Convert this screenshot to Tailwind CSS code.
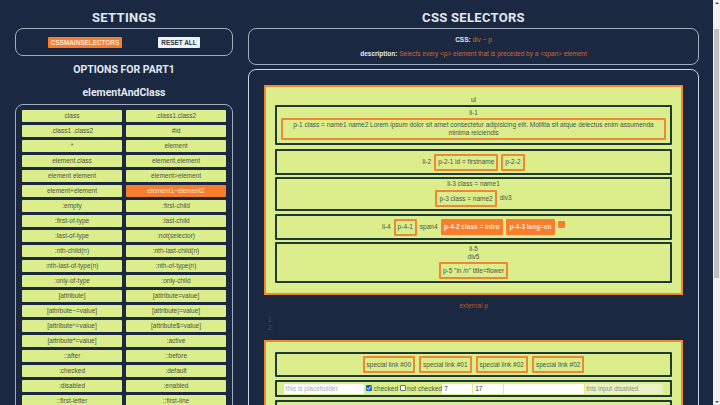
<!DOCTYPE html>
<html lang="en">
<head>
  <meta charset="UTF-8" />
  <title>CSS Selectors</title>
  <script src="https://cdn.jsdelivr.net/npm/@tailwindcss/browser@4"></script>
</head>
<body class="h-[405px] overflow-hidden bg-[#1a2842] font-['Roboto',sans-serif]">
  <div class="flex h-[405px]">
    <div class="flex h-[405px] w-[713px] gap-[15px] overflow-hidden pl-[15px]">
      <!-- Settings column -->
      <div class="w-[218px] shrink-0">
        <h2 class="pt-[10px] text-center text-[13px] leading-[16px] font-bold tracking-[0.3px] text-[#e2e8f0]">SETTINGS</h2>
        <div class="mt-[2px] flex h-[28px] items-center justify-center gap-[36px] rounded-[8px] border border-[#a0aec0]">
          <button class="h-[11px] w-[74px] rounded-[1px] bg-[#f97d2c] font-['Liberation_Sans',sans-serif] text-[6.4px] leading-[11px] font-bold text-[#fde8d8]">CSSMAINSELECTORS</button>
          <button class="h-[11px] w-[42px] rounded-[1px] bg-[#edf2f7] font-['Liberation_Sans',sans-serif] text-[6.4px] leading-[11px] font-bold text-[#2d3748]">RESET ALL</button>
        </div>
        <h3 class="mt-[7px] text-center text-[10.5px] leading-[14px] font-bold text-[#e2e8f0]">OPTIONS FOR PART1</h3>
        <h3 class="mt-[9px] text-center text-[10.5px] leading-[14px] font-bold text-[#e2e8f0]">elementAndClass</h3>
        <div class="mt-[4px] grid grid-cols-2 gap-x-[4px] gap-y-[3.5px] rounded-t-[8px] border border-[#a0aec0] px-[6px] pt-[5px] pb-[10px] font-['Liberation_Sans',sans-serif] text-[6.5px] leading-[11.5px] text-[#4a5548]">
          <div class="h-[11.5px] rounded-[1px] bg-[#dcee8c] text-center">class</div>
          <div class="h-[11.5px] rounded-[1px] bg-[#dcee8c] text-center">.class1.class2</div>
          <div class="h-[11.5px] rounded-[1px] bg-[#dcee8c] text-center">.class1 .class2</div>
          <div class="h-[11.5px] rounded-[1px] bg-[#dcee8c] text-center">#id</div>
          <div class="h-[11.5px] rounded-[1px] bg-[#dcee8c] text-center">*</div>
          <div class="h-[11.5px] rounded-[1px] bg-[#dcee8c] text-center">element</div>
          <div class="h-[11.5px] rounded-[1px] bg-[#dcee8c] text-center">element.class</div>
          <div class="h-[11.5px] rounded-[1px] bg-[#dcee8c] text-center">element,element</div>
          <div class="h-[11.5px] rounded-[1px] bg-[#dcee8c] text-center">element element</div>
          <div class="h-[11.5px] rounded-[1px] bg-[#dcee8c] text-center">element&gt;element</div>
          <div class="h-[11.5px] rounded-[1px] bg-[#dcee8c] text-center">element+element</div>
          <div class="h-[11.5px] rounded-[1px] bg-[#f97d2c] text-center text-[#fde8d8]">element1~element2</div>
          <div class="h-[11.5px] rounded-[1px] bg-[#dcee8c] text-center">:empty</div>
          <div class="h-[11.5px] rounded-[1px] bg-[#dcee8c] text-center">:first-child</div>
          <div class="h-[11.5px] rounded-[1px] bg-[#dcee8c] text-center">:first-of-type</div>
          <div class="h-[11.5px] rounded-[1px] bg-[#dcee8c] text-center">:last-child</div>
          <div class="h-[11.5px] rounded-[1px] bg-[#dcee8c] text-center">:last-of-type</div>
          <div class="h-[11.5px] rounded-[1px] bg-[#dcee8c] text-center">:not(selector)</div>
          <div class="h-[11.5px] rounded-[1px] bg-[#dcee8c] text-center">:nth-child(n)</div>
          <div class="h-[11.5px] rounded-[1px] bg-[#dcee8c] text-center">:nth-last-child(n)</div>
          <div class="h-[11.5px] rounded-[1px] bg-[#dcee8c] text-center">:nth-last-of-type(n)</div>
          <div class="h-[11.5px] rounded-[1px] bg-[#dcee8c] text-center">:nth-of-type(n)</div>
          <div class="h-[11.5px] rounded-[1px] bg-[#dcee8c] text-center">:only-of-type</div>
          <div class="h-[11.5px] rounded-[1px] bg-[#dcee8c] text-center">:only-child</div>
          <div class="h-[11.5px] rounded-[1px] bg-[#dcee8c] text-center">[attribute]</div>
          <div class="h-[11.5px] rounded-[1px] bg-[#dcee8c] text-center">[attribute=value]</div>
          <div class="h-[11.5px] rounded-[1px] bg-[#dcee8c] text-center">[attribute~=value]</div>
          <div class="h-[11.5px] rounded-[1px] bg-[#dcee8c] text-center">[attribute|=value]</div>
          <div class="h-[11.5px] rounded-[1px] bg-[#dcee8c] text-center">[attribute^=value]</div>
          <div class="h-[11.5px] rounded-[1px] bg-[#dcee8c] text-center">[attribute$=value]</div>
          <div class="h-[11.5px] rounded-[1px] bg-[#dcee8c] text-center">[attribute*=value]</div>
          <div class="h-[11.5px] rounded-[1px] bg-[#dcee8c] text-center">:active</div>
          <div class="h-[11.5px] rounded-[1px] bg-[#dcee8c] text-center">::after</div>
          <div class="h-[11.5px] rounded-[1px] bg-[#dcee8c] text-center">::before</div>
          <div class="h-[11.5px] rounded-[1px] bg-[#dcee8c] text-center">:checked</div>
          <div class="h-[11.5px] rounded-[1px] bg-[#dcee8c] text-center">:default</div>
          <div class="h-[11.5px] rounded-[1px] bg-[#dcee8c] text-center">:disabled</div>
          <div class="h-[11.5px] rounded-[1px] bg-[#dcee8c] text-center">:enabled</div>
          <div class="h-[11.5px] rounded-[1px] bg-[#dcee8c] text-center">::first-letter</div>
          <div class="h-[11.5px] rounded-[1px] bg-[#dcee8c] text-center">::first-line</div>
        </div>
      </div>

      <!-- Selectors column -->
      <div class="w-[451px] shrink-0">
        <h2 class="pt-[10px] text-center text-[13px] leading-[16px] font-bold tracking-[0.3px] text-[#e2e8f0]">CSS SELECTORS</h2>
        <div class="mt-[2px] h-[37px] rounded-[8px] border border-[#a0aec0] pt-[5px] text-center font-['Liberation_Sans',sans-serif] text-[6.5px] leading-[11px]">
          <p class="font-bold text-[#e2e8f0]">CSS: <span class="font-normal text-[#d8662a]">div ~ p</span></p>
          <p class="mt-[3px] font-bold text-[#e2e8f0]">description: <span class="font-normal text-[#d8662a]">Selects every &lt;p&gt; element that is preceded by a &lt;span&gt; element</span></p>
        </div>
        <div class="mt-[4px] rounded-t-[8px] border border-[#cbd5e0] px-[15px] pt-[15px] font-['Liberation_Sans',sans-serif] text-[6.5px] leading-[8px] text-[#4a5548]">
          <!-- first ul -->
          <div class="h-[210px] border-2 border-[#ed8936] bg-[#dcee8c] px-[9px] pt-[8px] text-center">
            <div class="leading-[9px]">ul</div>
            <div class="mt-[1px] h-[40px] rounded-[1px] border-2 border-[#1f3a36] pt-[2px]">
              li-1
              <div class="mx-[4px] mt-[1px] rounded-[1px] border-2 border-[#ed8936] py-[1px] leading-[8px]">p-1 class = name1 name2 Lorem ipsum dolor sit amet consectetur adipisicing elit. Mollitia sit atque delectus enim assumenda minima reiciendis</div>
            </div>
            <div class="mt-[4px] flex h-[26px] items-center justify-center gap-[3px] rounded-[1px] border-2 border-[#1f3a36]">
              <span>li-2</span>
              <span class="rounded-[1px] border-2 border-[#ed8936] px-[2px] py-[2.5px]">p-2-1 id = firstname</span>
              <span class="rounded-[1px] border-2 border-[#ed8936] px-[2px] py-[2.5px]">p-2-2</span>
            </div>
            <div class="mt-[2px] h-[34px] rounded-[1px] border-2 border-[#1f3a36] pt-[1px]">
              li-3 class = name1
              <div class="mt-[2px] flex justify-center gap-[3px]">
                <span class="rounded-[1px] border-2 border-[#ed8936] px-[2px] py-[2.5px]">p-3 class = name2</span>
                <span class="py-[4px]">div3</span>
              </div>
            </div>
            <div class="mt-[3px] flex h-[26px] items-center justify-center gap-[3px] rounded-[1px] border-2 border-[#1f3a36]">
              <span>li-4</span>
              <span class="rounded-[1px] border-2 border-[#ed8936] px-[2px] py-[2.5px]">p-4-1</span>
              <span>span4</span>
              <span class="rounded-[1px] bg-[#f97d2c] px-[3.5px] py-[4px] font-bold text-[#fde8d8]">p-4-2 class = intro</span>
              <span class="rounded-[1px] bg-[#f97d2c] px-[3.5px] py-[4px] font-bold text-[#fde8d8]">p-4-3 lang=en</span>
              <span class="mb-[6px] h-[7px] w-[7px] rounded-[1px] bg-[#f97d2c]"></span>
            </div>
            <div class="mt-[2px] h-[41px] rounded-[1px] border-2 border-[#1f3a36] pt-[1px]">
              li-5
              <div>div5</div>
              <div class="mt-[1px] flex justify-center">
                <span class="rounded-[1px] border-2 border-[#ed8936] px-[2px] py-[2.5px]">p-5 "in /n" title=flower</span>
              </div>
            </div>
          </div>
          <div class="mt-[7px] text-center text-[#c05621]">external p</div>
          <ol class="mt-[6px] pl-[4px] text-[#4a5568]">
            <li>1.</li>
            <li>2.</li>
          </ol>
          <!-- second ul -->
          <div class="mt-[8px] border-2 border-[#ed8936] bg-[#dcee8c] px-[9px] pt-[10px] pb-[10px]">
            <div class="flex h-[25px] items-center justify-center gap-[4px] rounded-[1px] border-2 border-[#1f3a36]">
              <span class="rounded-[1px] border-2 border-[#ed8936] px-[2px] py-[2.5px]">special link #00</span>
              <span class="rounded-[1px] border-2 border-[#ed8936] px-[2px] py-[2.5px]">special link #01</span>
              <span class="rounded-[1px] border-2 border-[#ed8936] px-[2px] py-[2.5px]">special link #02</span>
              <span class="rounded-[1px] border-2 border-[#ed8936] px-[2px] py-[2.5px]">special link #02</span>
            </div>
            <div class="mt-[3px] flex h-[17px] items-center justify-center rounded-[1px] border-2 border-[#1f3a36]">
              <span class="flex h-[10px] w-[80px] items-center bg-white px-[2px] text-[#a0aec0]">this is placeholder</span>
              <svg class="ml-[2px] mb-[1px] rounded-[1px] bg-[#1a66c9]" width="6" height="6" viewBox="0 0 6 6"><path d="M1 3 L2.5 4.5 L5 1.5" fill="none" stroke="#fff" stroke-width="1"/></svg>
              <span class="ml-[2px]">checked</span>
              <span class="ml-[2px] mb-[1px] h-[6px] w-[6px] rounded-[1px] border border-[#6b7280] bg-white"></span>
              <span class="ml-[1px]">not checked</span>
              <span class="flex h-[10px] w-[30px] items-center bg-white px-[2px] text-[#2d3748]">7</span>
              <span class="ml-[1px] flex h-[10px] w-[30px] items-center bg-white px-[2px] text-[#2d3748]">17</span>
              <span class="ml-[1px] h-[10px] w-[80px] bg-white"></span>
              <span class="ml-[1px] flex h-[10px] w-[78px] items-center bg-[#e8f2c4] px-[1px] text-[#8a9480]">this input disabled</span>
            </div>
            <div class="mt-[3px] h-[18px] rounded-[1px] border-2 border-[#1f3a36]"></div>
          </div>
        </div>
      </div>
    </div>
    <!-- scrollbar -->
    <div class="relative h-[405px] w-[7px] shrink-0 bg-[#f1f1f1]">
      <svg class="absolute top-[1px] left-[1.5px]" width="4" height="4" viewBox="0 0 4 4"><path d="M2 1 L4 3 L0 3 Z" fill="#505050"/></svg>
      <div class="absolute top-[29px] left-[1px] h-[249px] w-[5px] bg-[#c1c1c1]"></div>
      <svg class="absolute bottom-[1px] left-[1.5px]" width="4" height="4" viewBox="0 0 4 4"><path d="M0 1 L4 1 L2 3 Z" fill="#505050"/></svg>
    </div>
  </div>
</body>
</html>
